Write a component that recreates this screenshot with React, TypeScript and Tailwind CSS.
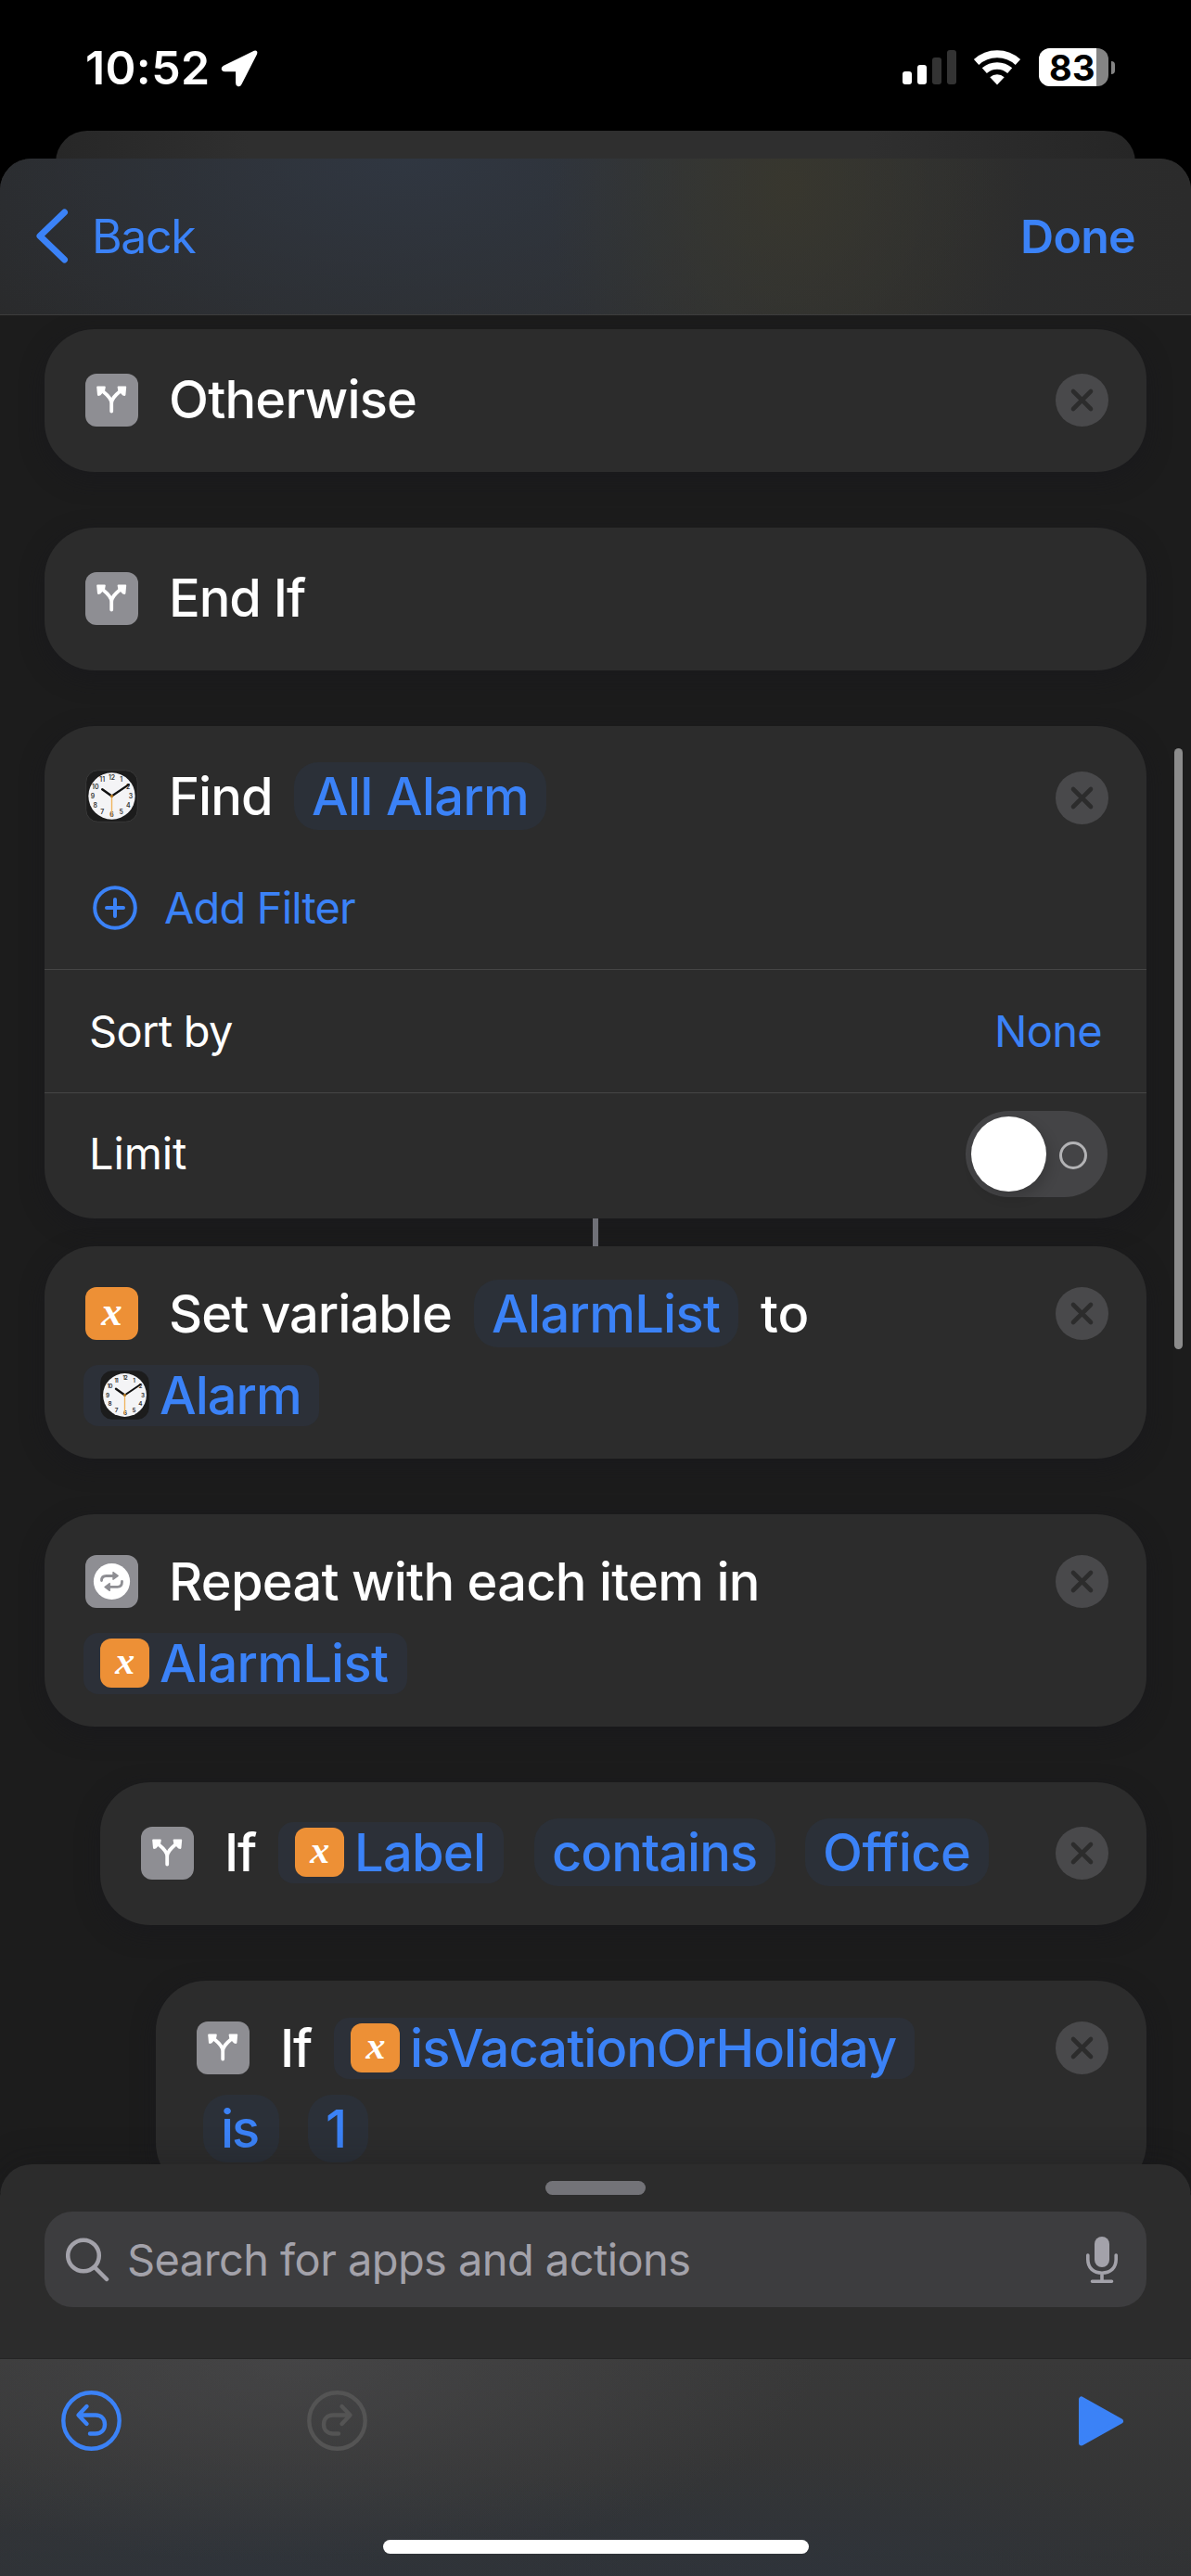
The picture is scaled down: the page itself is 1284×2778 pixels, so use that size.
import type { ReactNode } from "react";

const HOURS = [12, 1, 2, 3, 4, 5, 6, 7, 8, 9, 10, 11];

function BranchIcon() {
  return (
    <span className="flex size-[57px] shrink-0 items-center justify-center rounded-[12px] bg-[#8e8e93]">
      <svg width="57" height="57" viewBox="0 0 57 57" fill="none">
        <path d="M28.2 40.5V32C28.2 27 24.5 23.5 19.5 19.5M28.2 32C28.2 27 32 23.5 36.8 19.5" stroke="#fff" strokeWidth="3.8" strokeLinecap="round" />
        <path d="M13.2 14.4h7.6l-.6 3.2-4.6 5-1.6.3z M43.2 14.4h-7.6l.6 3.2 4.6 5 1.6.3z" fill="#fff" stroke="#fff" strokeWidth="2" strokeLinejoin="round" />
      </svg>
    </span>
  );
}

function RepeatIcon() {
  return (
    <span className="flex size-[57px] shrink-0 rounded-[12px] bg-[#8e8e93]">
      <svg width="57" height="57" viewBox="0 0 57 57" fill="none">
        <circle cx="28.5" cy="28.5" r="19.6" fill="#fff" />
        <path d="M17.5 27.5c0-3.4 1.6-5 5-5H30M39.5 28.5v.5c0 3.8-1.6 5.4-5 5.4H26" stroke="#8e8e93" strokeWidth="2.8" strokeLinecap="round" />
        <path d="M30 18.6v7.6l5.2-3.8zM26.2 30.6v7.8l-5.2-3.9z" fill="#8e8e93" stroke="#8e8e93" strokeWidth="1.4" strokeLinejoin="round" />
      </svg>
    </span>
  );
}

function VariableIcon({ small = false }: { small?: boolean }) {
  return (
    <span className={`flex shrink-0 items-center justify-center rounded-[12px] bg-[#ed9036] ${small ? "size-[53px]" : "size-[57px]"}`}>
      <span className={`font-['Liberation_Serif',serif] font-bold italic text-white ${small ? "-mt-[6px] text-[42px] leading-[44px]" : "-mt-[5px] text-[45px] leading-[48px]"}`}>x</span>
    </span>
  );
}

function ClockIcon({ small = false }: { small?: boolean }) {
  return (
    <svg className={small ? "size-[53px] shrink-0" : "size-[57px] shrink-0"} viewBox="0 0 53 53">
      <rect x=".7" y=".7" width="51.6" height="51.6" rx="12" fill="#1c1c1c" stroke={small ? "#1c1c1c" : "#3c3c3c"} strokeWidth=".8" />
      <circle cx="26.5" cy="26.5" r="23.4" fill="#f4f4f6" />
      {HOURS.map((h) => (
        <text
          key={h}
          x={26.5 + 19 * Math.sin((h * Math.PI) / 6)}
          y={28.8 - 18.8 * Math.cos((h * Math.PI) / 6)}
          textAnchor="middle"
          className="font-['Inter',sans-serif] text-[6.4px] font-semibold"
          fill="#333"
        >
          {h}
        </text>
      ))}
      <path d="M26.5 26.5L17 19.8" stroke="#111" strokeWidth="2.4" strokeLinecap="round" />
      <path d="M26.5 26.5L43.5 15" stroke="#111" strokeWidth="2.1" strokeLinecap="round" />
      <path d="M26.5 25V47" stroke="#efb45c" strokeWidth="1.3" />
      <circle cx="26.5" cy="26.5" r="1.5" fill="#b87a22" />
    </svg>
  );
}

function RemoveButton({ className = "" }: { className?: string }) {
  return (
    <button className={`mr-[41px] ml-auto size-[57px] shrink-0 ${className}`} aria-label="Remove action">
      <svg width="57" height="57" viewBox="0 0 57 57">
        <circle cx="28.5" cy="28.5" r="28.5" fill="#49494b" />
        <path d="M19 19l19 19M38 19l-19 19" stroke="#2c2c2c" strokeWidth="4.6" strokeLinecap="round" />
      </svg>
    </button>
  );
}

function Card({ className = "", children }: { className?: string; children: ReactNode }) {
  return (
    <section className={`mr-12 flex shrink-0 flex-col rounded-[54px] bg-[#2c2c2c] shadow-[0_8px_24px_rgba(24,24,30,0.55)] ${className}`}>
      {children}
    </section>
  );
}

function Row({ className = "", children }: { className?: string; children: ReactNode }) {
  return <div className={`flex h-[73px] shrink-0 items-center whitespace-nowrap text-[56px] leading-[75px] font-medium ${className}`}>{children}</div>;
}

function Label({ className = "", children }: { className?: string; children: ReactNode }) {
  return <span className={`mt-[2px] ml-[33px] ${className}`}>{children}</span>;
}

function TextPill({ className = "", children }: { className?: string; children: ReactNode }) {
  return <span className={`h-[73px] shrink-0 rounded-[26px] bg-[#2b3038] pl-[19px] text-[#3b82f7] ${className}`}>{children}</span>;
}

function IconPill({ icon, className = "", children }: { icon: ReactNode; className?: string; children: ReactNode }) {
  return (
    <span className={`flex h-[66px] shrink-0 items-center gap-[11px] rounded-[16px] bg-[#2c3038] pl-[18px] text-[#3b82f7] ${className}`}>
      {icon}
      <span className="mt-[2px]">{children}</span>
    </span>
  );
}

function StatusBar() {
  return (
    <div className="flex h-[141px] shrink-0 items-start bg-black pt-[41px] text-white">
      <span className="ml-[92px] w-[146px] text-[50px] leading-[64px] font-semibold tracking-[0.37px]">10:52</span>
      <svg className="mt-[13px]" width="40" height="40" viewBox="0 0 40 40">
        <path d="M36.6 2.4L3.4 18.6c-1.6 1-1 3 .8 3h12.6c.8 0 1 .3 1 1V35.600c0 2.200 2.200 2.600 3 .8L37.400 4C38 2.400 37.600 2 36.600 2.400z" fill="#fff" stroke="#fff" strokeWidth="3.4" strokeLinejoin="round" />
      </svg>
      <div className="mt-[13px] ml-[695px] flex h-[37px] items-end gap-[6px]">
        <span className="h-[14px] w-[10px] rounded-[3px] bg-white" />
        <span className="h-[21px] w-[10px] rounded-[3px] bg-white" />
        <span className="h-[29px] w-[10px] rounded-[3px] bg-[#333]" />
        <span className="h-[37px] w-[10px] rounded-[3px] bg-[#333]" />
      </div>
      <svg className="mt-[13px] ml-[18px]" width="53" height="38" viewBox="0 0 53 38" fill="none">
        <path d="M3.600 13A33 33 0 0 1 48.400 13" stroke="#fff" strokeWidth="8" />
        <path d="M12.300 22.200A20.500 20.500 0 0 1 39.700 22.200" stroke="#fff" strokeWidth="7.600" />
        <path d="M26 37.500L18.300 29.300A11.500 11.500 0 0 1 33.700 29.300z" fill="#fff" />
      </svg>
      <div className="mt-[11px] ml-[18px] flex h-[41px] w-[75px] rounded-[12px] bg-[#848484]">
        <span className="h-[41px] w-[62px] rounded-l-[12px] bg-white pl-[11px] text-[38px] leading-[42px] font-bold tracking-[0.3px] text-black">83</span>
      </div>
      <span className="mt-[25px] ml-[3px] h-[14px] w-[4px] rounded-r-full bg-[#848484]" />
    </div>
  );
}

function NavBar() {
  return (
    <header className="flex h-[169px] shrink-0 items-center rounded-t-[34px] border-b border-[#3d3d3d] bg-[#2c2c2c] bg-[radial-gradient(ellipse_260px_300px_at_850px_30px,rgba(58,56,44,0.8),transparent),radial-gradient(ellipse_640px_300px_at_440px_0px,rgba(48,55,66,0.95),transparent),linear-gradient(90deg,#292929,#2e2f30_60%,#2b2b2b)] text-[50px] leading-[64px] text-[#3b82f7]">
      <svg className="ml-[37px]" width="37" height="62" viewBox="0 0 37 62" fill="none">
        <path d="M32.500 5L6 30.500L32.500 56" stroke="#3b82f7" strokeWidth="7" strokeLinecap="round" strokeLinejoin="round" />
      </svg>
      <span className="ml-[25px] tracking-[-1.4px]">Back</span>
      <span className="mr-[60px] ml-auto font-semibold tracking-[-0.7px]">Done</span>
    </header>
  );
}

function FindCard() {
  return (
    <Card className="ml-12 h-[531px] pt-[39px]">
      <Row className="pl-11">
        <ClockIcon />
        <Label className="w-[135px] tracking-[-0.9px]">Find</Label>
        <TextPill className="w-[272px] tracking-[-0.73px]">All Alarm</TextPill>
        <RemoveButton className="mt-[3px]" />
      </Row>
      <div className="mt-[18px] flex h-[132px] items-center pl-[52px] text-[47px] tracking-[-0.86px] text-[#3b82f7]">
        <svg width="48" height="48" viewBox="0 0 48 48" fill="none" stroke="#3b82f7" strokeWidth="4" strokeLinecap="round">
          <circle cx="24" cy="24" r="21.800" />
          <path d="M24 15v18M15 24h18" />
        </svg>
        <span className="ml-[29px]">Add Filter</span>
      </div>
      <div className="flex h-[133px] items-center border-t border-[#454545] pr-[48px] pl-12 text-[47px] tracking-[-0.7px] text-white">
        <span>Sort by</span>
        <span className="ml-auto text-[#3b82f7]">None</span>
      </div>
      <div className="flex h-[132px] items-center border-t border-[#454545] pr-[42px] pl-[48px] text-[47px] tracking-[-0.13px] text-white">
        <span>Limit</span>
        <span className="ml-auto flex h-[93px] w-[153px] items-center rounded-full bg-[#444446] pl-[6px]">
          <span className="size-[81px] rounded-full bg-white shadow-[4px_6px_14px_rgba(0,0,0,0.16)]" />
          <span className="mt-[2px] ml-[14px] size-[30px] rounded-full border-[3px] border-[#b3b3b5]" />
        </span>
      </div>
    </Card>
  );
}

function ActionList() {
  return (
    <main className="relative flex h-[2025px] shrink-0 flex-col overflow-hidden bg-[#1c1c1c] pt-[15px] text-white">
      <Card className="ml-12 h-[154px] pt-[39px]">
        <Row className="pl-11">
          <span className="mt-[2px]"><BranchIcon /></span>
          <Label className="tracking-[-0.8px]">Otherwise</Label>
          <RemoveButton className="mt-[2px]" />
        </Row>
      </Card>
      <Card className="mt-[60px] ml-12 h-[154px] pt-[39px]">
        <Row className="pl-11">
          <span className="mt-[2px]"><BranchIcon /></span>
          <Label className="tracking-[-1.05px]">End If</Label>
        </Row>
      </Card>
      <div className="h-[60px] shrink-0" />
      <FindCard />
      <span className="relative ml-[639px] h-[30px] w-[6px] shrink-0 bg-[#6f7077]" />
      <Card className="ml-12 h-[229px] pt-9">
        <Row className="pl-11">
          <VariableIcon />
          <Label className="w-[329px] tracking-[-0.97px]">Set variable</Label>
          <TextPill className="w-[285px] tracking-[-0.71px]">AlarmList</TextPill>
          <span className="mt-[2px] ml-[24px]">to</span>
          <RemoveButton />
        </Row>
        <Row className="mt-[15px] pl-[42px]">
          <IconPill icon={<ClockIcon small />} className="w-[254px] tracking-[-1px]">Alarm</IconPill>
        </Row>
      </Card>
      <Card className="mt-[60px] ml-12 h-[229px] pt-9">
        <Row className="pl-11">
          <RepeatIcon />
          <Label className="tracking-[-0.75px]">Repeat with each item in</Label>
          <RemoveButton />
        </Row>
        <Row className="mt-[15px] pl-[42px]">
          <IconPill icon={<VariableIcon small />} className="w-[349px] tracking-[-0.71px]">AlarmList</IconPill>
        </Row>
      </Card>
      <Card className="mt-[60px] ml-[108px] h-[154px] pt-[39px]">
        <Row className="pl-11">
          <span className="mt-[2px]"><BranchIcon /></span>
          <Label className="w-[58px] tracking-[-1.26px]">If</Label>
          <IconPill icon={<VariableIcon small />} className="w-[243px] tracking-[-0.74px]">Label</IconPill>
          <TextPill className="ml-[33px] w-[260px] tracking-[-0.97px]">contains</TextPill>
          <TextPill className="ml-[32px] w-[198px] tracking-[-0.55px]">Office</TextPill>
          <RemoveButton className="mt-[2px]" />
        </Row>
      </Card>
      <Card className="mt-[60px] ml-[168px] h-[229px] pt-9">
        <Row className="pl-11">
          <BranchIcon />
          <Label className="w-[58px] tracking-[-1.26px]">If</Label>
          <IconPill icon={<VariableIcon small />} className="w-[626px] tracking-[-0.96px]">isVacationOrHoliday</IconPill>
          <RemoveButton />
        </Row>
        <Row className="mt-[14px] pl-[51px]">
          <TextPill className="w-[82px] tracking-[-2px]">is</TextPill>
          <TextPill className="ml-[31px] w-[65px]">1</TextPill>
        </Row>
      </Card>
      <span className="absolute top-[467px] right-[9px] h-[648px] w-[9px] rounded-full bg-[#8c8c8c]" />
    </main>
  );
}

function SearchSheet() {
  return (
    <section className="relative -mt-[31px] flex h-[210px] shrink-0 flex-col items-center rounded-t-[34px] border-b border-[#242424] bg-[#2c2c2c] pt-[18px] shadow-[0_0_36px_rgba(20,20,24,0.35)]">
      <span className="h-[15px] w-[108px] rounded-full bg-[#737378]" />
      <div className="mt-[18px] flex h-[103px] w-[1188px] items-center rounded-[30px] bg-[#3d3d3f] pr-[31px] pl-[23px] text-[#a3a2aa]">
        <svg width="48" height="48" viewBox="0 0 48 48" fill="none" stroke="#a3a2aa" strokeWidth="4.500" strokeLinecap="round">
          <circle cx="19" cy="19.500" r="16.800" />
          <path d="M31 32L44 45" />
        </svg>
        <span className="ml-[18px] text-[47px] leading-[64px] tracking-[-0.58px]">Search for apps and actions</span>
        <svg className="ml-auto" width="34" height="50" viewBox="0 0 34 50" fill="none" stroke="#a3a2aa" strokeWidth="3.600" strokeLinecap="round">
          <rect x="9" y="0" width="16" height="33" rx="8" fill="#a3a2aa" stroke="none" />
          <path d="M1.800 20v4.500C1.800 34 8 39.200 17 39.200S32.200 34 32.200 24.500V20M17 39.500V48M6.500 48.200h21" />
        </svg>
      </div>
    </section>
  );
}

function Toolbar() {
  return (
    <footer className="relative flex h-[234px] shrink-0 flex-col items-center bg-[radial-gradient(ellipse_560px_220px_at_320px_0px,rgba(76,76,78,0.6),transparent),radial-gradient(ellipse_620px_130px_at_270px_234px,rgba(46,52,60,0.8),transparent),radial-gradient(ellipse_480px_130px_at_860px_234px,rgba(46,52,60,0.8),transparent),linear-gradient(180deg,#393939,#313233)]">
      <div className="flex w-full items-center pt-[34px] pl-[66px]">
        <svg width="65" height="65" viewBox="0 0 65 65" fill="none" stroke="#3b82f7" strokeWidth="4.400" strokeLinecap="round" strokeLinejoin="round">
          <circle cx="32.500" cy="32.500" r="30.200" />
          <path d="M27.500 17L18.500 26.500L27.500 36M19.500 26.500H37C43.500 26.500 47 31 47 36.500S43.500 46.500 37 46.500H31" />
        </svg>
        <svg className="ml-[200px]" width="65" height="65" viewBox="0 0 65 65" fill="none" stroke="#545454" strokeWidth="4.400" strokeLinecap="round" strokeLinejoin="round">
          <circle cx="32.500" cy="32.500" r="30.200" />
          <path d="M37.500 17L46.500 26.500L37.500 36M45.500 26.500H28C21.500 26.500 18 31 18 36.500S21.500 46.500 28 46.500H34" />
        </svg>
        <svg className="mr-[72px] ml-auto" width="50" height="56" viewBox="0 0 50 56">
          <path d="M4 4.500V51.500L46 28z" fill="#3b82f7" stroke="#3b82f7" strokeWidth="6" strokeLinejoin="round" />
        </svg>
      </div>
      <span className="mt-auto mb-6 h-[15px] w-[459px] rounded-full bg-white" />
    </footer>
  );
}

export default function App() {
  return (
    <div className="flex h-[2778px] w-[1284px] flex-col overflow-hidden bg-black font-['Inter',sans-serif]">
      <StatusBar />
      <div className="mx-[60px] -mb-[34px] h-[64px] shrink-0 rounded-t-[34px] bg-[linear-gradient(90deg,#272727,#2f2f2f_18%,#2f2f2f_75%,#262626)]" />
      <div className="relative flex flex-col">
        <NavBar />
        <ActionList />
        <SearchSheet />
        <Toolbar />
      </div>
    </div>
  );
}
